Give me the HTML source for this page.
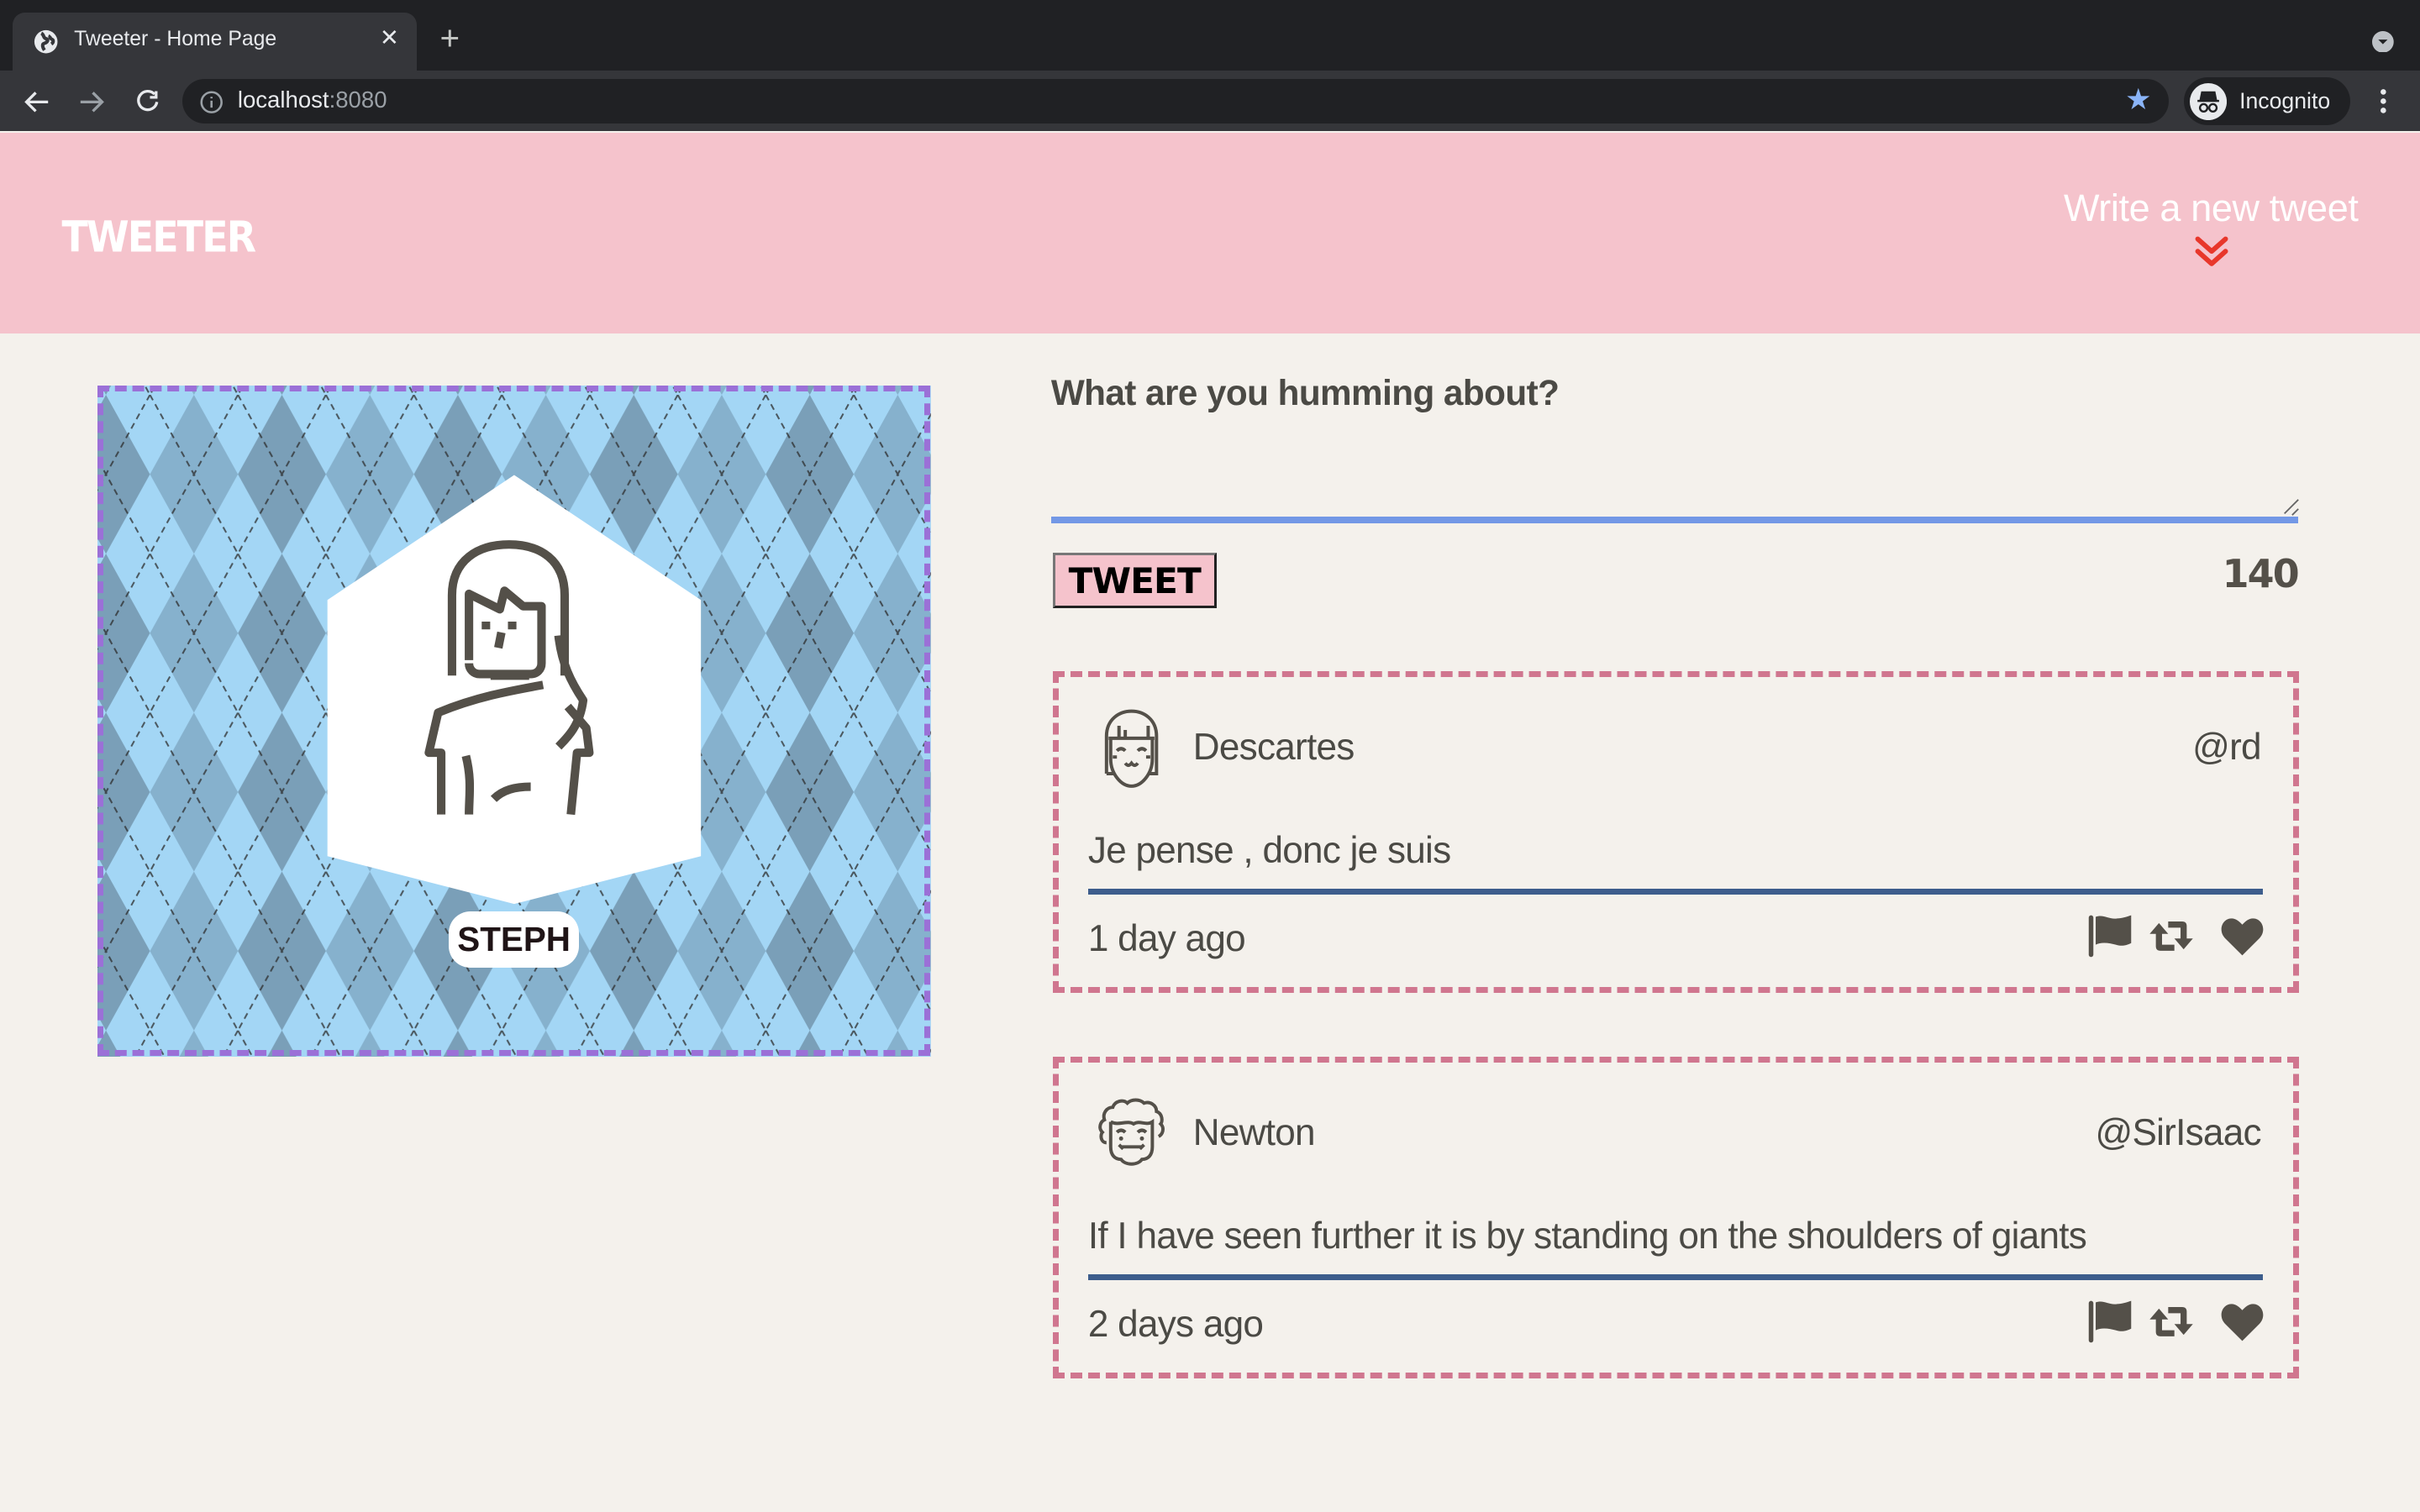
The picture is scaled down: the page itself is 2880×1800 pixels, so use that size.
<!DOCTYPE html>
<html><head><meta charset="utf-8"><style>
html,body{margin:0;padding:0;width:2880px;height:1800px;overflow:hidden;background:#f4f1ec}
#w{zoom:1.836735;width:1568px;height:980px;position:relative;font-family:"Liberation Sans",sans-serif}
.a{position:absolute}
.heavy{font-family:"DejaVu Sans","Liberation Sans",sans-serif;font-weight:900;}
.t{color:#4b4a45;font-weight:300;font-size:24px;letter-spacing:-0.4px}
</style></head><body><div id="w">
<!-- chrome -->
<div class="a" style="left:0;top:0;width:1568px;height:46px;background:#202124"></div>
<div class="a" style="left:8px;top:8px;width:262px;height:38px;background:#35363a;border-radius:8px 8px 0 0"></div>
<svg class="a" style="left:22px;top:19px" width="16" height="16" viewBox="0 0 16 16"><circle cx="8" cy="8" r="7.5" fill="#e8eaed"/><path d="M5 2.5c2 1 1 3 3 3.5s1 2.5-1 3-1 3 0 4.5M11 4c-1 1 0 2 1 2.5s1 2-0.5 3" stroke="#35363a" stroke-width="2.2" fill="none"/></svg>
<div class="a" style="left:48px;top:18px;font-size:13.5px;color:#e8eaed">Tweeter - Home Page</div>
<div class="a" style="left:246px;top:16px;font-size:15px;color:#e8eaed">✕</div>
<div class="a" style="left:285px;top:12px;font-size:22px;color:#c4c7c5;font-weight:300">+</div>
<svg class="a" style="left:1537px;top:20px" width="14" height="14"><circle cx="7" cy="7" r="7" fill="#bdc1c6"/><path d="M4 5.5l3 3 3-3z" fill="#202124"/></svg>
<div class="a" style="left:0;top:46px;width:1568px;height:39px;background:#35363a"></div>
<svg class="a" style="left:14px;top:56px" width="100" height="20" viewBox="0 0 100 20"><g stroke="#e8eaed" stroke-width="1.8" fill="none"><path d="M17 10H3M9 4L3 10l6 6"/><path d="M38 10h14M46 4l6 6-6 6" stroke="#9aa0a6"/><path d="M86 5a6 6 0 1 0 1.5 5"/><path d="M87 3v4h-4"/></g></svg>
<div class="a" style="left:118px;top:51px;width:1287px;height:29px;background:#202124;border-radius:15px"></div>
<svg class="a" style="left:129px;top:58px" width="16" height="16"><circle cx="8" cy="8" r="6.5" stroke="#9aa0a6" stroke-width="1.4" fill="none"/><path d="M8 7v4.5M8 4.5v1" stroke="#9aa0a6" stroke-width="1.4"/></svg>
<div class="a" style="left:154px;top:56px;font-size:15px;color:#e8eaed">localhost<span style="color:#9aa0a6">:8080</span></div>
<div class="a" style="left:1377px;top:54px;font-size:19px;color:#8ab4f8">★</div>
<div class="a" style="left:1415px;top:50px;width:108px;height:31px;background:#202124;border-radius:16px"></div>
<svg class="a" style="left:1419px;top:54px" width="24" height="24"><circle cx="12" cy="12" r="12" fill="#e8eaed"/><path d="M8 6h8l1 5H7z M5 11.5h14" stroke="#202124" stroke-width="1.4" fill="#202124"/><circle cx="9" cy="16" r="2.4" stroke="#202124" stroke-width="1.3" fill="none"/><circle cx="15" cy="16" r="2.4" stroke="#202124" stroke-width="1.3" fill="none"/></svg>
<div class="a" style="left:1451px;top:57px;font-size:14.5px;color:#e8eaed">Incognito</div>
<svg class="a" style="left:1540px;top:56px" width="8" height="20"><circle cx="4" cy="3.5" r="1.8" fill="#e8eaed"/><circle cx="4" cy="9.5" r="1.8" fill="#e8eaed"/><circle cx="4" cy="15.5" r="1.8" fill="#e8eaed"/></svg>
<!-- header -->
<div class="a" style="left:0;top:86px;width:1568px;height:130px;background:#f5c3cc"></div>
<div class="a heavy" style="left:40px;top:137px;font-size:25px;color:#fff;letter-spacing:-1px;transform:scaleY(1.1);transform-origin:left top">TWEETER</div>
<div class="a" style="left:1228px;top:121px;width:300px;text-align:right;font-size:24.5px;letter-spacing:-0.2px;color:#fff;font-weight:300"><b>Write</b> a new tweet</div>
<svg class="a" style="left:1421px;top:152px" width="24" height="24" viewBox="0 0 24 24"><path d="M3 3l9 8 9-8M3 11l9 8 9-8" stroke="#e8372b" stroke-width="3.2" stroke-linecap="round" stroke-linejoin="round" fill="none"/></svg>
<!-- profile -->
<div class="a" style="left:63px;top:250px;width:540px;height:435px;overflow:hidden">
<svg width="540" height="435" style="position:absolute;left:0;top:0">
<defs><pattern id="p" width="114" height="103" patternUnits="userSpaceOnUse" x="34" y="6">
<rect width="114" height="103" fill="#a3d6f5"/>
<path d="M28.5 0L57 51.5L28.5 103L0 51.5Z" fill="#86b1cd"/>
<path d="M85.5 0L114 51.5L85.5 103L57 51.5Z" fill="#7a9fb8"/>
<path d="M0 0L57 103M57 0L0 103M57 0L114 103M114 0L57 103" stroke="#2a2a2a" stroke-width="1.1" stroke-dasharray="4 3" fill="none" opacity="0.75"/>
</pattern></defs>
<rect width="540" height="435" fill="url(#p)"/>
<polygon points="270,58 391,139 391,305 270,336 149,305 149,139" fill="#fff"/>
</svg>
<svg class="a" style="left:205px;top:98px" width="130" height="185" viewBox="0 0 130 185"><g stroke="#545049" stroke-width="5.5" fill="none" stroke-linejoin="round">
<path d="M25 90V38C25 15 42 5 62 5S98 15 98 38V90"/>
<path d="M36 80V37l20 10 3-12 12 10h12v37c0 4-3 7-7 7H43c-4 0-7-3-7-7"/>
<path d="M50 90H75"/>
<path d="M94 64C96 82 102 94 110 106C108 122 100 130 94 136"/>
<path d="M100 110L112 124L114 140H106L102 180"/><path d="M84 96C62 100 40 104 16 114L10 140H18V180"/>
<path d="M34 142C38 158 36 168 36 180"/><path d="M52 170C58 164 66 162 76 162"/>
<path d="M47 55v5M64 55v5"/><path d="M57 62l-2 10"/>
</g></svg>
<div class="a" style="left:228px;top:341px;width:84px;height:36px;background:#fff;border-radius:14px;font-size:22px;font-weight:bold;color:#1f1416;text-align:center;line-height:36px">STEPH</div>
</div>
<div class="a" style="left:63px;top:250px;width:532px;height:427px;border:4px dashed #9b70d7"></div>
<!-- compose -->
<div class="a" style="left:681px;top:242px;font-size:23px;letter-spacing:-0.3px;font-weight:bold;color:#4b4a45">What are you humming about?</div>
<div class="a" style="left:681px;top:335px;width:808px;height:4px;background:#7398e6"></div>
<svg class="a" style="left:1478px;top:323px" width="12" height="12"><path d="M2 10l9-9M7 11l4-4" stroke="#666" stroke-width="1"/></svg>
<div class="a heavy" style="left:682px;top:358px;width:103px;height:33px;background:#f5c3cc;border:2px solid #222;border-top-color:#777;border-left-color:#777;font-size:23px;letter-spacing:-0.5px;line-height:34px;text-align:center;color:#000">TWEET</div>
<div class="a heavy" style="left:1400px;top:357px;width:89px;text-align:right;font-size:25px;letter-spacing:-1px;color:#545049">140</div>
<!-- tweets -->
<div class="a" style="left:682px;top:435px;width:800px;height:201px;border:4px dashed #d0768f"></div>
<div class="a" style="left:682px;top:685px;width:800px;height:201px;border:4px dashed #d0768f"></div>

<svg class="a" style="left:706px;top:456px" width="54" height="58" viewBox="0 0 40 40"><g stroke="#545049" stroke-width="1.6" fill="none"><path d="M8 32V14C8 6 14 2 20 2S32 6 32 14V32H28"/><path d="M8 32h4"/><path d="M9 15H31"/><path d="M14 15V9M28 15V9M17 15v-4"/><path d="M10 15v10c0 7 5 13 10 13s10-6 10-13V15"/><path d="M13 21q2-2 4 0M23 21q2-2 4 0M17 27q1.5 2 3 0q1.5 2 3 0"/><path d="M11 24h2M27 24h2"/></g></svg>
<div class="a t" style="left:773px;top:471px">Descartes</div>
<div class="a t" style="left:1380px;top:471px;width:85px;text-align:right">@rd</div>
<div class="a t" style="left:705px;top:538px">Je pense , donc je suis</div>
<div class="a" style="left:705px;top:576px;width:761px;height:4px;background:#3d5d8c"></div>
<div class="a t" style="left:705px;top:595px">1 day ago</div>

<svg class="a" style="left:706px;top:707px" width="54" height="56" viewBox="0 0 40 40"><g stroke="#545049" stroke-width="1.6" fill="none"><path d="M8 24c-3 0-3-4-2-5c-2-2-1-5 1-6c-1-3 1-6 4-6c1-3 5-4 7-2c2-2 6-2 8 0c3-1 6 1 6 4c3 1 3 5 2 6c2 2 1 5-1 6"/><path d="M10 14v12c0 4 2 6 5 6c2 3 8 3 10 0c3 0 5-2 5-6V14c-3 2-6-1-9 1c-3-2-7 1-11-1"/><path d="M13 19q2-2 4 0M23 19q2-2 4 0M15 26h10M14 25l2 2M26 25l-2 2"/></g><circle cx="15" cy="22" r="1" fill="#545049"/><circle cx="25" cy="22" r="1" fill="#545049"/></svg>
<div class="a t" style="left:773px;top:721px">Newton</div>
<div class="a t" style="left:1300px;top:721px;width:165px;text-align:right">@SirIsaac</div>
<div class="a t" style="left:705px;top:788px">If I have seen further it is by standing on the shoulders of giants</div>
<div class="a" style="left:705px;top:826px;width:761px;height:4px;background:#3d5d8c"></div>
<div class="a t" style="left:705px;top:845px">2 days ago</div>

<svg class="a" style="left:1352px;top:591px" width="116" height="32" viewBox="0 0 116 32"><g id="ic" fill="#545049"><rect x="1.5" y="2" width="3" height="27" rx="1.5"/><path d="M6 3c5-2 9 2 14 1c3 0 6-1 9-2v18c-4 2-7 2-10 1c-4-1-9-2-13 0z"/><path d="M45 14v8c0 2 1 3 3 3h9v-4h-8v-7h4l-6-7-6 7z"/><path d="M53 6h9c2 0 3 1 3 3v8h4l-6 7-6-7h4v-7h-8z"/><path d="M101 28l-11-11c-5-5-2-13 4-13c3 0 5 2 7 4c2-2 4-4 7-4c6 0 9 8 4 13z"/></g></svg>
<svg class="a" style="left:1352px;top:841px" width="116" height="32" viewBox="0 0 116 32"><use href="#ic"/></svg>
</div></body></html>
